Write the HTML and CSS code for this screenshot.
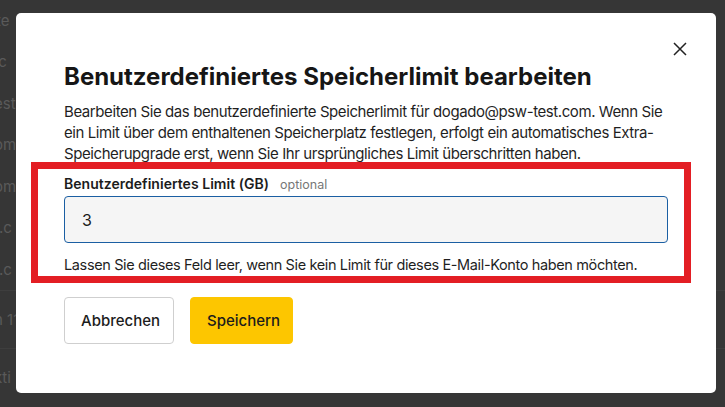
FILE: index.html
```html
<!DOCTYPE html>
<html lang="de">
<head>
<meta charset="utf-8">
<title>Speicherlimit bearbeiten</title>
<link rel="stylesheet" href="styles.css">
</head>
<body>
<div class="page">
  <div class="top-row"><span class="bg-a">te</span><span class="bg-b">.... ....  ..  ..</span></div>
  <div class="bg-row">.c</div>
  <div class="bg-row">est</div>
  <div class="bg-row">om</div>
  <div class="bg-row">om</div>
  <div class="bg-row">t.c</div>
  <div class="bg-row">t.c</div>
  <div class="bg-row line">n 11</div>
  <div class="bg-row line">kti</div>
</div>

<div class="modal" role="dialog">
  <button class="close" aria-label="Schließen">
    <svg width="14" height="14" viewBox="0 0 14 14"><path d="M1 1L13 13M13 1L1 13" stroke="#222" stroke-width="1.5" fill="none"/></svg>
  </button>
  <h1 class="title">Benutzerdefiniertes Speicherlimit bearbeiten</h1>
  <p class="intro">Bearbeiten Sie das benutzerdefinierte Speicherlimit für dogado@psw-test.com. Wenn Sie ein Limit über dem enthaltenen Speicherplatz festlegen, erfolgt ein automatisches Extra-Speicherupgrade erst, wenn Sie Ihr ursprüngliches Limit überschritten haben.</p>
  <div class="field">
    <div class="label-row"><span class="label">Benutzerdefiniertes Limit (GB)</span><span class="optional">optional</span></div>
    <div class="input">3</div>
    <p class="help">Lassen Sie dieses Feld leer, wenn Sie kein Limit für dieses E-Mail-Konto haben möchten.</p>
    <div class="highlight"></div>
  </div>
  <div class="actions">
    <button class="btn btn-secondary">Abbrechen</button>
    <button class="btn btn-primary">Speichern</button>
  </div>
</div>
</body>
</html>
```
FILE: styles.css
```css
* { box-sizing: border-box; }
html, body { margin: 0; height: 100%; }
body {
  background: #363636;
  font-family: Inter, "Noto Sans", "Liberation Sans", sans-serif;
  color: #1c1c1c;
  overflow: hidden;
}
.page {
  color: #5a5a5a;
  font-size: 15px;
}
.top-row { height: 41px; display: flex; align-items: center; gap: 160px; }
.bg-a { margin-left: -4px; }
.bg-b { color: #444; }
.bg-row { height: 41.5px; display: flex; align-items: center; margin-left: -6px; }
.bg-row.line { border-top: 1px solid #3e3e3e; height: 58px; }

.modal {
  position: absolute;
  left: 16px;
  top: 13px;
  width: 700px;
  height: 380px;
  background: #fff;
  border-radius: 5px;
  padding: 48px 48px 0;
}
.close {
  position: absolute;
  top: 29px;
  left: 657px;
  width: 14px;
  height: 14px;
  padding: 0;
  border: 0;
  background: none;
  display: flex;
}
.title {
  margin: 0;
  font-size: 24px;
  line-height: 32px;
  font-weight: 700;
  letter-spacing: 0;
  color: #161616;
}
.intro {
  margin: 8px 0 0;
  font-size: 15px;
  line-height: 21px;
  letter-spacing: -0.42px;
  color: #1f1f1f;
}
.field { position: relative; margin-top: 11px; }
.label-row { display: flex; align-items: baseline; gap: 11px; height: 20px; }
.label { font-size: 14px; font-weight: 600; letter-spacing: 0.03px; }
.optional { font-size: 12.5px; color: #777; }
.input {
  margin-top: 1px;
  height: 47px;
  border: 1px solid #1b5fa3;
  border-radius: 4px;
  background: #f5f5f5;
  padding-left: 17px;
  display: flex;
  align-items: center;
  font-size: 16px;
}
.help {
  margin: 11px 0 0;
  font-size: 14.5px;
  line-height: 21px;
  letter-spacing: -0.37px;
  color: #1f1f1f;
}
.highlight {
  position: absolute;
  left: -33.5px;
  top: -13.5px;
  width: 660px;
  height: 121px;
  border: 7px solid #e31e24;
  pointer-events: none;
}
.actions { display: flex; gap: 16px; margin-top: 22px; }
.btn {
  height: 47px;
  border-radius: 4px;
  font-family: inherit;
  font-size: 15px;
  font-weight: 500;
  color: #1c1c1c;
  padding: 0 16px;
}
.btn-secondary { background: #fff; border: 1px solid #cfcfcf; width: 110px; }
.btn-primary { background: #fdc600; border: 1px solid #fdc600; width: 103px; }
```
